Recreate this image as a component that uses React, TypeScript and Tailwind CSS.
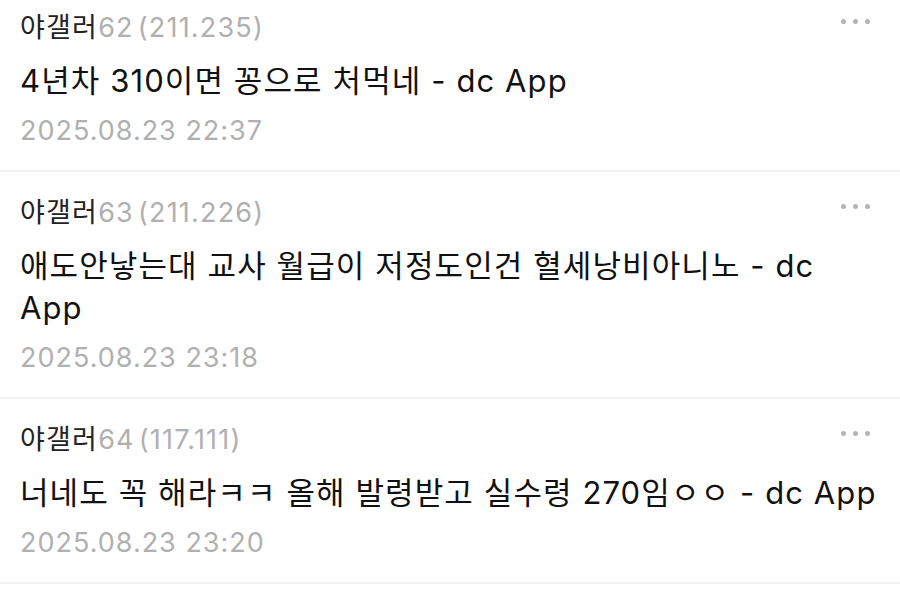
const COMMENTS = [
  {
    nick: '야갤러',
    num: '62',
    ip: '(211.235)',
    body: '4년차 310이면 꽁으로 처먹네 - dc App',
    date: '2025.08.23 22:37',
  },
  {
    nick: '야갤러',
    num: '63',
    ip: '(211.226)',
    body: '애도안낳는대 교사 월급이 저정도인건 혈세낭비아니노 - dc App',
    date: '2025.08.23 23:18',
  },
  {
    nick: '야갤러',
    num: '64',
    ip: '(117.111)',
    body: '너네도 꼭 해라ㅋㅋ 올해 발령받고 실수령 270임ㅇㅇ - dc App',
    date: '2025.08.23 23:20',
  },
];

function MoreDots() {
  return (
    <div className="flex items-center gap-[7px] pt-[6px] mr-[8px]">
      <span className="w-[5px] h-[5px] rounded-full bg-[#b4b4b4]" />
      <span className="w-[5px] h-[5px] rounded-full bg-[#b4b4b4]" />
      <span className="w-[5px] h-[5px] rounded-full bg-[#b4b4b4]" />
    </div>
  );
}

export default function App() {
  return (
    <div
      className="w-[900px] h-[589px] overflow-hidden bg-white"
      style={{ fontFamily: '"Inter", "Noto Sans CJK KR", sans-serif' }}
    >
      <ul className="-mt-[13px]">
        {COMMENTS.map((c) => (
          <li key={c.num} className="border-b-2 border-[#f2f2f2] pl-5 pr-[22px] pt-[26px] pb-[24px]">
            <div className="flex items-start justify-between">
              <div className="text-[27px] leading-[30px] tracking-[1.2px]">
                <span className="text-[#222]">{c.nick}</span>
                <span className="text-[#b0b0b0]">{c.num}</span>
                <span className="text-[#b0b0b0] ml-[4px]">{c.ip}</span>
              </div>
              <MoreDots />
            </div>
            <p className="mt-[17px] text-[31px] leading-[42px] text-[#111] tracking-[1.1px]">{c.body}</p>
            <div className="mt-[14px] text-[27px] leading-[30px] text-[#b0b0b0] tracking-[1px]">{c.date}</div>
          </li>
        ))}
      </ul>
    </div>
  );
}
